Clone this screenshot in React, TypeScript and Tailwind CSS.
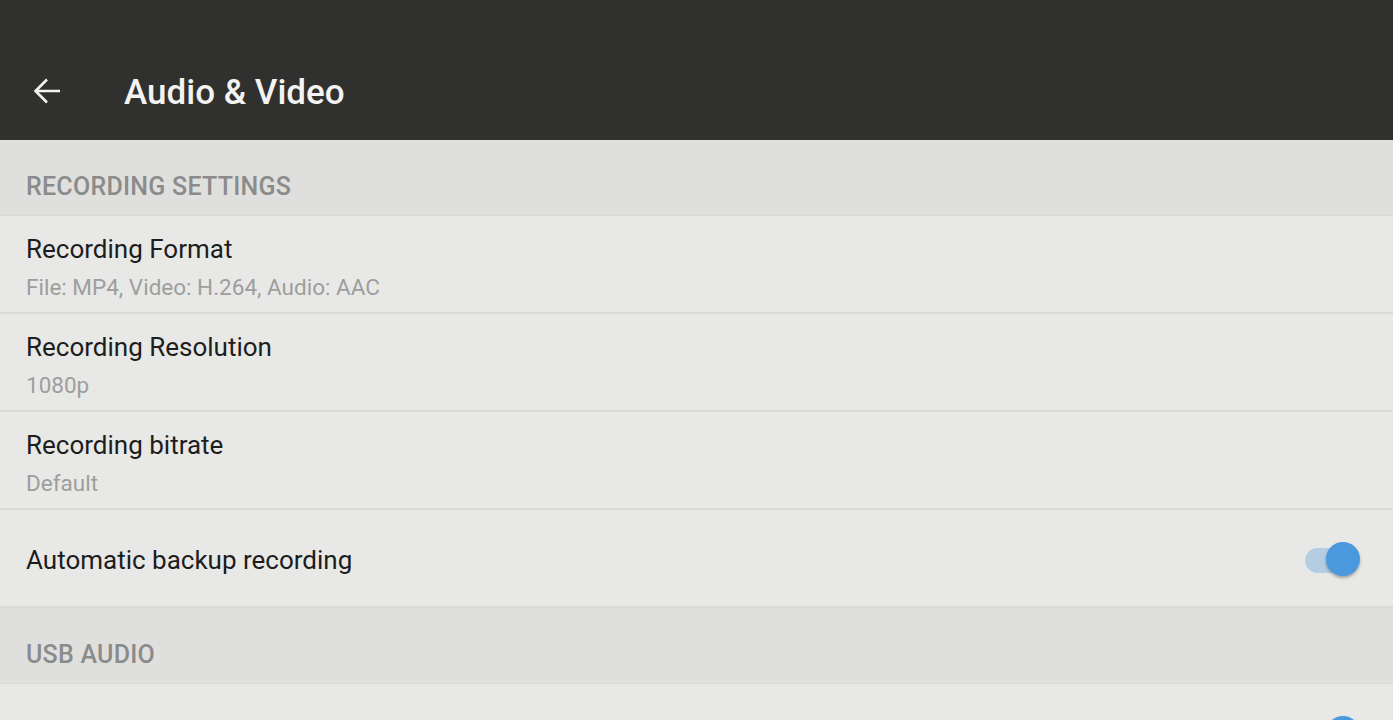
import type { FC } from "react";

interface RowProps {
  title?: string;
  subtitle?: string;
  toggle?: boolean;
}

const Toggle: FC = () => (
  <div className="relative w-[56px] h-[36px] flex items-center">
    <div className="ml-[1px] h-[25px] w-[40px] rounded-full bg-[#b4cde2]" />
    <div className="absolute right-0 top-0 h-[34px] w-[34px] rounded-full bg-[#4a98dd] shadow-[0_2px_3px_rgba(0,0,0,0.3)]" />
  </div>
);

const SectionHeader: FC<{ label: string }> = ({ label }) => (
  <div className="h-[76px] pt-[32px] px-[26px] bg-[#dfe0de] border-b border-[#d9dad8]">
    <span className="block text-[25px] leading-[30px] font-medium tracking-[0.25px] text-[#8a8b8a] uppercase">
      {label}
    </span>
  </div>
);

const Row: FC<RowProps> = ({ title, subtitle, toggle }) =>
  toggle ? (
    <div className="h-[98px] flex items-center justify-between px-[26px] pr-[33px] pt-[4px] bg-[#e8e9e7] border-b-2 border-[#d8d9d7]">
      <span className="text-[26px] leading-[32px] text-[#1d1d1d]">{title}</span>
      <Toggle />
    </div>
  ) : (
    <div className="h-[98px] flex flex-col px-[26px] pt-[17px] bg-[#e8e9e7] border-b-2 border-[#d8d9d7]">
      <span className="text-[26px] leading-[32px] text-[#1d1d1d]">{title}</span>
      <span className="mt-[9px] text-[22.5px] leading-[26px] text-[#9d9e9d]">
        {subtitle}
      </span>
    </div>
  );

export default function App() {
  return (
    <div
      className="w-[1393px] h-[720px] overflow-hidden bg-[#e8e9e7]"
      style={{ fontFamily: "Roboto, 'Noto Sans', sans-serif" }}
    >
      {/* app bar */}
      <div className="h-[140px] bg-[#30312f] flex items-end pb-[25px]">
        <div className="w-[124px] h-[44px] flex items-center pl-[33px]">
          <svg width="28" height="28" viewBox="0 0 28 28" fill="none" className="-mt-[4px]">
            <path
              d="M27 14H3M14 2.5L2.5 14 14 25.5"
              stroke="#f3f3f2"
              strokeWidth="2.6"
            />
          </svg>
        </div>
        <h1 className="text-[35px] leading-[44px] font-medium text-[#f3f3f2]">
          Audio &amp; Video
        </h1>
      </div>

      <SectionHeader label="Recording settings" />
      <Row title="Recording Format" subtitle="File: MP4, Video: H.264, Audio: AAC" />
      <Row title="Recording Resolution" subtitle="1080p" />
      <Row title="Recording bitrate" subtitle="Default" />
      <Row title="Automatic backup recording" toggle />

      <SectionHeader label="USB audio" />
      <Row toggle />
    </div>
  );
}
